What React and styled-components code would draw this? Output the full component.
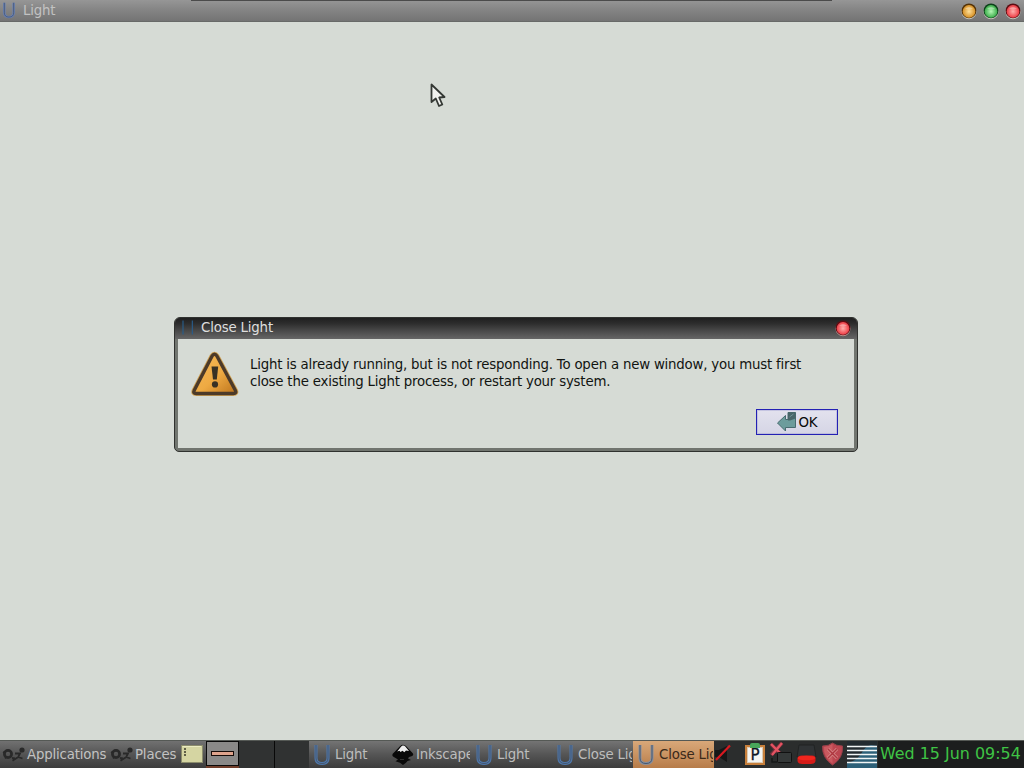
import React from 'react';
import styled, { createGlobalStyle } from 'styled-components';

const GlobalStyle = createGlobalStyle`
  * { box-sizing: border-box; }
  body {
    margin: 0;
    overflow: hidden;
    font-family: "DejaVu Sans", sans-serif;
    font-size: 13.33px;
    letter-spacing: -0.17px;
  }
  svg { display: block; flex: none; }
`;

const Desktop = styled.div`
  position: relative;
  width: 1024px;
  height: 768px;
  display: grid;
  grid-template-rows: 22px 1fr 28px;
  background: #d6dbd5;
  overflow: hidden;
`;

const WindowBar = styled.header`
  display: flex;
  align-items: center;
  padding: 0 3px 0 2px;
  color: #c2c2c2;
  background: linear-gradient(#969696, #858585 45%, #747474);
  border-bottom: 1px solid #686a68;
`;

const TopEdge = styled.div`
  position: absolute;
  top: 0;
  left: 191px;
  width: 641px;
  height: 1px;
  background: #4b4b4b;
`;

const BarTitle = styled.span`
  flex: 1;
  padding-left: ${(p) => p.$gap}px;
  line-height: 18px;
`;

const Controls = styled.div`
  display: flex;
  gap: 6px;
`;

const Dialog = styled.section`
  position: absolute;
  left: 174px;
  top: 317px;
  width: 684px;
  height: 135px;
  display: flex;
  flex-direction: column;
  padding: 0 3px 3px;
  border: 1px solid #30322f;
  border-radius: 6px 6px 5px 5px;
  background: #71756f;
`;

const DialogBar = styled.div`
  height: 21px;
  margin: 0 -3px;
  padding: 0 6px 2px 7px;
  display: flex;
  align-items: center;
  color: #dedede;
  border-radius: 5px 5px 0 0;
  background: linear-gradient(#1f1f1f, #2c2c2c 25%, #444 55%, #666);
`;

const DialogBody = styled.div`
  flex: 1;
  display: flex;
  flex-direction: column;
  background: #d6dbd5;
`;

const Message = styled.div`
  display: flex;
  padding: 12px 0 0 13px;
  gap: 10px;
  height: 70px;
`;

const MessageText = styled.p`
  margin: 0;
  padding-top: 5px;
  line-height: 17px;
  letter-spacing: -0.2px;
  color: #111411;
  white-space: nowrap;
`;

const OkButton = styled.button`
  align-self: flex-end;
  width: 82px;
  height: 26px;
  margin-right: 16px;
  padding: 0;
  display: flex;
  align-items: center;
  justify-content: center;
  gap: 1px;
  font: inherit;
  color: #080808;
  border: 1px solid #2421b4;
  outline: 1px solid #8d8ccd55;
  outline-offset: -2px;
  background: linear-gradient(#e3e2ee, #d5d5e5);
`;

const Taskbar = styled.footer`
  display: flex;
  border-top: 1px solid #555955;
  background: #2b2d2d;
  color: #c2c2c2;
`;

const MenuButton = styled.div`
  width: ${(p) => p.$width}px;
  display: flex;
  align-items: center;
  gap: 2px;
  padding-left: 2px;
  white-space: nowrap;
  background: linear-gradient(#717171, #555 48%, #3c3c3c);
`;

const Note = styled.div`
  width: 28px;
  display: flex;
  align-items: center;
  justify-content: center;
  padding-bottom: 2px;
  background: linear-gradient(#717171, #555 48%, #3c3c3c);
`;

const Pager = styled.div`
  display: grid;
  grid-template-columns: 33px 36px 34px;
  width: 103px;
`;

const Workspace = styled.div`
  display: flex;
  align-items: center;
  justify-content: center;
  height: ${(p) => (p.$active ? 25 : 27)}px;
  border: ${(p) => (p.$active ? '1px solid #0a0a0a' : 'none')};
  border-right: 1px solid #080808;
  background: ${(p) => (p.$active ? '#8a8988' : '#303232')};
  box-shadow: ${(p) => (p.$active ? '0 2px #713e2b' : 'none')};

  &:last-child { border-right: none; }
`;

const MiniWindow = styled.div`
  width: 23px;
  height: 5px;
  border: 1px solid #160b08;
  background: #dfa38c;
`;

const Tasks = styled.nav`
  display: grid;
  grid-template-columns: repeat(5, 81px);
`;

const Task = styled.div`
  display: flex;
  align-items: center;
  gap: ${(p) => p.$gap}px;
  padding: 0 1px 0 ${(p) => p.$inset}px;
  overflow: hidden;
  white-space: nowrap;
  color: ${(p) => (p.$active ? '#3b291a' : '#bdbdbd')};
  background: ${(p) =>
    p.$active
      ? 'linear-gradient(#d9a879, #c99362 50%, #b77c49)'
      : 'linear-gradient(#747474, #565656 48%, #3c3c3c)'};
`;

const TaskLabel = styled.span`
  flex: 1;
  min-width: 0;
  overflow: hidden;
  line-height: 20px;
`;

const Tray = styled.div`
  width: 164px;
  display: flex;
  align-items: center;
`;

const Clock = styled.time`
  flex: 1;
  padding-left: 2px;
  line-height: 25px;
  font-size: 15.92px;
  letter-spacing: 0;
  white-space: nowrap;
  color: #3fc445;
  background: #1c1e1e;
`;

const Cursor = styled.svg`
  position: absolute;
  left: 429px;
  top: 82px;
`;

const orbColors = {
  amber: ['#ffe09a', '#dc9b34', '#553206'],
  green: ['#b6f7b6', '#4bb758', '#0c421a'],
  red: ['#ffb1ad', '#f04a51', '#5d0c12'],
};

function Orb({ color, ring = true }) {
  const [light, mid, dark] = orbColors[color];
  const id = `orb-${color}-${ring}`;
  return (
    <svg width="16" height="18" viewBox="0 0 16 18">
      <defs>
        <radialGradient id={id} cx="50%" cy="50%" r="55%">
          <stop offset="0" stopColor={light} />
          <stop offset=".8" stopColor={mid} />
          <stop offset="1" stopColor={mid} />
        </radialGradient>
      </defs>
      <circle cx="8" cy="9.7" r="7.5" fill={ring ? '#c5c3b9' : '#b58e8c'} />
      <circle cx="8" cy="8.8" r="7.4" fill={dark} />
      <circle cx="8" cy="9.4" r="6.3" fill={`url(#${id})`} />
      <path d="M4 6.8Q8 3.2 12 6.8Q8 8.2 4 6.8Z" fill="#fff" opacity=".3" />
    </svg>
  );
}

function LightLogo({ width = 18, height = 22, color = '#557eaf', open = false }) {
  return (
    <svg width={width} height={height} viewBox="0 0 18 22" preserveAspectRatio="none" fill="none">
      {open ? (
        <path d="M1.5 2V20M15.5 2V20" stroke={color} strokeWidth="1.7" />
      ) : (
        <>
          <path d="M3 1V14Q3 19.5 9 19.5T15 14V1" stroke={color} strokeWidth="3" />
          <path d="M3 1V14Q3 19.5 9 19.5T15 14V1" stroke="#46566d" strokeWidth="1" />
        </>
      )}
    </svg>
  );
}

function WarningIcon() {
  return (
    <svg width="49" height="48" viewBox="0 0 49 48">
      <defs>
        <linearGradient id="warning" x1="0" y1="0" x2="1" y2="1">
          <stop offset="0" stopColor="#f6ba5a" />
          <stop offset=".55" stopColor="#eeaa43" />
          <stop offset="1" stopColor="#bd741c" />
        </linearGradient>
      </defs>
      <path d="M21 5.2Q23.5 1.3 26 5.2L44.3 39.2Q46 42.5 42.3 42.5H5.2Q1.7 42.5 3.3 39.2Z" fill="none" stroke="#cfa052" strokeWidth="5" strokeLinejoin="round" />
      <path d="M21 5.2Q23.5 1.3 26 5.2L44.3 39.2Q46 42.5 42.3 42.5H5.2Q1.7 42.5 3.3 39.2Z" fill="url(#warning)" stroke="#4c3a29" strokeWidth="3.4" strokeLinejoin="round" />
      <path d="M20.5 15.5H27.2L25.8 28.5H22Z" fill="#383124" />
      <circle cx="24" cy="33.4" r="3.1" fill="#383124" />
    </svg>
  );
}

function ReturnIcon() {
  return (
    <svg width="21" height="20" viewBox="0 0 21 20">
      <path d="M12 .5H19.5V15.5H9.5V19L1.5 11L9.5 3.5V7.5H12Z" fill="#6c9c9c" stroke="#486c70" strokeWidth="1" />
      <path d="M12 .5H19.5V6.5L14 8.5H12Z" fill="#496669" />
      <path d="M13.5 5L17.5 2" stroke="#709395" />
    </svg>
  );
}

function FootIcon() {
  return (
    <svg width="23" height="18" viewBox="0 0 23 18" fill="none" stroke="#292929">
      <circle cx="6" cy="8" r="3.6" strokeWidth="2.7" />
      <path d="M1 6L3 7M3 12.5L5 10.5" strokeWidth="1.5" />
      <circle cx="20" cy="4" r="2.6" fill="#292929" stroke="none" />
      <path d="M13 7.5L18 7.5L16.2 11L20.5 12.5M16.3 11L10.5 14.7M10 12L13 12.5" strokeWidth="1.8" />
    </svg>
  );
}

function NoteIcon() {
  return (
    <svg width="22" height="18" viewBox="0 0 22 18">
      <rect x=".5" y=".5" width="21" height="17" fill="#d5d5a2" stroke="#8b8c6c" />
      <path d="M1.5 1.5H20" stroke="#ebebc1" />
      <path d="M3 4H5M3 7H5M3 10H5" stroke="#38382b" strokeWidth="1.6" />
    </svg>
  );
}

function InkscapeIcon() {
  return (
    <svg width="22" height="22" viewBox="0 0 22 22">
      <path d="M11 .8Q13 .8 14.5 2.5L20.5 9Q23 12 17 13L16 14.5L19 16L15.5 17L14 18.7L11 21L8 18.8L3.5 17.3L6 15.5L3.5 14L1 12.5Q-.7 10.5 2 8.5L8 2.2Q9.5 .8 11 .8Z" fill="#090909" />
      <path d="M11 1.5Q12.6 1.5 13.5 2.7L17 7L14 6.5L12.3 8.3L10.5 6.8L8.5 8L7.5 6.8L5.2 7.5L9 2.7Q10 1.5 11 1.5Z" fill="#ececec" />
      <path d="M8 15.5H12" stroke="#444" strokeWidth=".7" />
    </svg>
  );
}

function VolumeIcon() {
  return (
    <svg width="31" height="27" viewBox="0 0 31 27">
      <path d="M1 9H5L13 5V21L5 16H1Z" fill="#151717" />
      <path d="M2 19L16 4.5" stroke="#d71920" strokeWidth="2.2" />
    </svg>
  );
}

const ClipboardFrame = styled.div`
  position: relative;
  width: 20px;
  height: 20px;
  margin: 1px 4px 0 0;
  display: flex;
  align-items: center;
  justify-content: center;
  border: 2px solid #c77f3b;
  outline: 1px solid #dccbb4;
  outline-offset: -3px;
  background: #f4f4f2;
  color: #101624;
  font-size: 15px;
  line-height: 16px;
  -webkit-text-stroke: 0.3px #101624;
`;

const Clip = styled.div`
  position: absolute;
  top: -4px;
  left: 3px;
  width: 10px;
  height: 5px;
  border-radius: 2px 2px 0 0;
  background: #48a65a;
`;

function NetworkIcon() {
  return (
    <svg width="26" height="27" viewBox="0 0 26 27">
      <path d="M2 3L13 15M13 2L2 14" stroke="#712e39" strokeWidth="4" />
      <path d="M2 3L13 14M13 2L3 14" stroke="#e45362" strokeWidth="2.3" />
      <rect x="8.5" y="11.5" width="14" height="10" rx="1" fill="#343838" stroke="#111" />
      <path d="M3 17V21H8" fill="none" stroke="#161818" strokeWidth="1.4" />
    </svg>
  );
}

function DiskIcon() {
  return (
    <svg width="25" height="27" viewBox="0 0 25 27">
      <path d="M4 4H19L21 16H2Z" fill="#303335" stroke="#202323" />
      <path d="M2.5 17Q3 14.5 7 14.5H17Q20.5 14.5 20.5 17V20Q20 23 16 23H7Q3 23 2.5 20Z" fill="#d51b18" />
      <ellipse cx="11.5" cy="17" rx="8.8" ry="2.3" fill="#f1261e" />
    </svg>
  );
}

function ShieldIcon() {
  return (
    <svg width="27" height="27" viewBox="-1 0 27 27">
      <path d="M11.5 2Q15 5 21.5 5Q22.5 17 11.5 24Q1 17 1.5 5Q8 5 11.5 2Z" fill="#bc4650" stroke="#954049" />
      <path d="M11.5 3Q8.5 5.5 3 6Q2.5 16 11.5 22.5Z" fill="#d36a6c" opacity=".55" />
      <path d="M7 8L16 17M16 8L7 17" stroke="#d98d8d" strokeWidth="3" />
      <path d="M7 8L16 17M16 8L7 17" stroke="#ad353e" strokeWidth="1.5" />
    </svg>
  );
}

function LoadChart() {
  return (
    <svg width="30" height="27" viewBox="0 0 30 27">
      <rect width="30" height="27" fill="#222b30" />
      <path d="M0 22Q8 21 14 13Q18 5 24 4L30 5V27H0Z" fill="#2d6078" />
      <path d="M0 5.5H30M0 9.5H30M0 13.5H30M0 17.5H30M0 21.5H30" stroke="#f1f5f5" strokeWidth="1.3" />
    </svg>
  );
}

const tasks = [
  { title: 'Light' },
  { title: 'Inkscape', inkscape: true },
  { title: 'Light' },
  { title: 'Close Light' },
  { title: 'Close Light', active: true },
];

export default function App() {
  return (
    <>
      <GlobalStyle />
      <Desktop>
        <WindowBar>
          <TopEdge />
          <LightLogo width={14} height={17} color="#657fb7" />
          <BarTitle $gap={7}>Light</BarTitle>
          <Controls>
            <Orb color="amber" />
            <Orb color="green" />
            <Orb color="red" />
          </Controls>
        </WindowBar>
        <main />
        <Taskbar>
          <MenuButton $width={108}><FootIcon />Applications</MenuButton>
          <MenuButton $width={70}><FootIcon />Places</MenuButton>
          <Note><NoteIcon /></Note>
          <Pager>
            <Workspace $active><MiniWindow /></Workspace>
            <Workspace />
            <Workspace />
          </Pager>
          <Tasks>
            {tasks.map((task, index) => (
              <Task key={index} $active={task.active} $gap={task.inkscape ? 2 : 4} $inset={task.inkscape ? 2 : 4}>
                {task.inkscape ? <InkscapeIcon /> : <LightLogo color={task.active ? '#878f9e' : '#4f79ae'} />}
                <TaskLabel>{task.title}</TaskLabel>
              </Task>
            ))}
          </Tasks>
          <Tray>
            <VolumeIcon />
            <ClipboardFrame>P<Clip /></ClipboardFrame>
            <NetworkIcon />
            <DiskIcon />
            <ShieldIcon />
            <LoadChart />
          </Tray>
          <Clock>Wed 15 Jun 09:54</Clock>
        </Taskbar>
        <Dialog>
          <DialogBar>
            <LightLogo width={12} height={17} color="#285d8b" open />
            <BarTitle $gap={7}>Close Light</BarTitle>
            <Orb color="red" ring={false} />
          </DialogBar>
          <DialogBody>
            <Message>
              <WarningIcon />
              <MessageText>
                Light is already running, but is not responding. To open a new window, you must first<br />
                close the existing Light process, or restart your system.
              </MessageText>
            </Message>
            <OkButton><ReturnIcon />OK</OkButton>
          </DialogBody>
        </Dialog>
        <Cursor width="17" height="27" viewBox="0 0 17 27">
          <path d="M2.5 2.5V20L6.8 16.5L10 24L13.3 22.5L10.2 15.5L15.5 15Z" fill="#f1f2ef" stroke="#343834" strokeWidth="1.8" strokeLinejoin="round" />
        </Cursor>
      </Desktop>
    </>
  );
}
